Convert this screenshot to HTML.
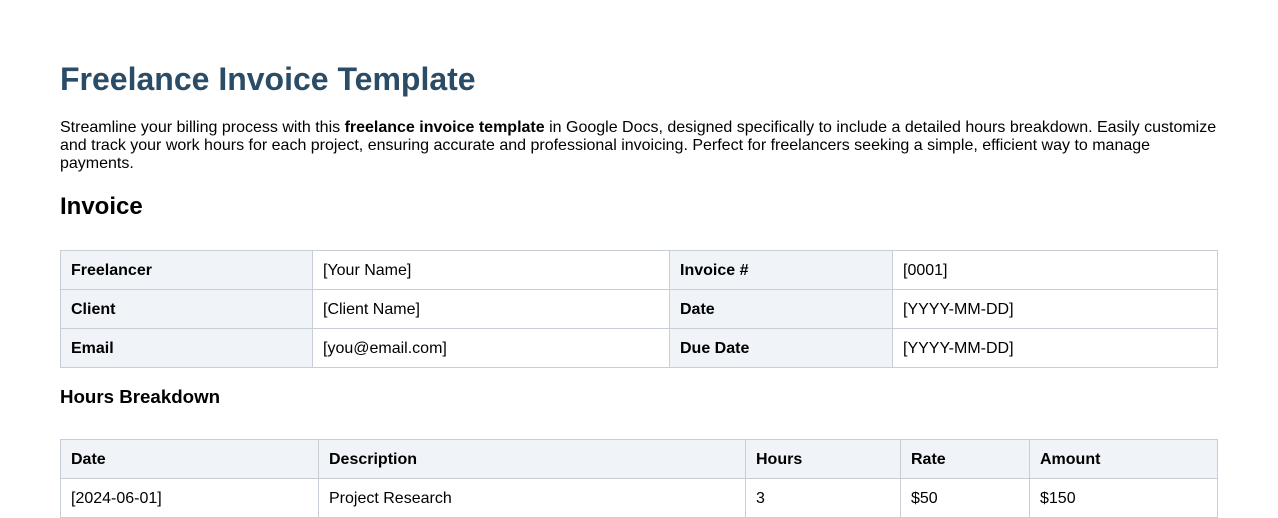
<!DOCTYPE html>
<html><head><style>
body{margin:0;background:#fff;font-family:"Liberation Sans",Arial,sans-serif;color:#000;width:1278px;height:501px;overflow:hidden}
h1{position:absolute;left:60px;top:60px;margin:0;font-size:32px;font-weight:bold;color:#2a4c66;line-height:38px}
p{position:absolute;left:60px;top:119px;width:1160px;margin:0;font-size:16px;line-height:18px}
h2{position:absolute;left:60px;top:193px;margin:0;font-size:24px;line-height:28px}
h3{position:absolute;left:60px;top:386px;margin:0;font-size:18.72px;line-height:22px}
table{position:absolute;left:60px;width:1158px;border-collapse:collapse;table-layout:fixed;font-size:16px}
td{border:1px solid #c8ced6;height:38px;padding:2px 10px 0;box-sizing:border-box;vertical-align:middle}
.h{background:#f0f4f9;font-weight:bold}
</style></head><body>
<h1>Freelance Invoice Template</h1>
<p>Streamline your billing process with this <b>freelance invoice template</b> in Google Docs, designed specifically to include a detailed hours breakdown. Easily customize and track your work hours for each project, ensuring accurate and professional invoicing. Perfect for freelancers seeking a simple, efficient way to manage payments.</p>
<h2>Invoice</h2>
<table style="top:250px">
<colgroup><col style="width:252px"><col style="width:357px"><col style="width:223px"><col></colgroup>
<tr style="height:39px"><td class="h">Freelancer</td><td>[Your Name]</td><td class="h">Invoice #</td><td>[0001]</td></tr>
<tr style="height:39px"><td class="h">Client</td><td>[Client Name]</td><td class="h">Date</td><td>[YYYY-MM-DD]</td></tr>
<tr style="height:39px"><td class="h">Email</td><td>[you@email.com]</td><td class="h">Due Date</td><td>[YYYY-MM-DD]</td></tr>
</table>
<h3>Hours Breakdown</h3>
<table style="top:439px">
<colgroup><col style="width:258px"><col style="width:427px"><col style="width:155px"><col style="width:129px"><col></colgroup>
<tr style="height:39px" class="h"><td>Date</td><td>Description</td><td>Hours</td><td>Rate</td><td>Amount</td></tr>
<tr style="height:39px"><td>[2024-06-01]</td><td>Project Research</td><td>3</td><td>$50</td><td>$150</td></tr>
</table>
</body></html>
